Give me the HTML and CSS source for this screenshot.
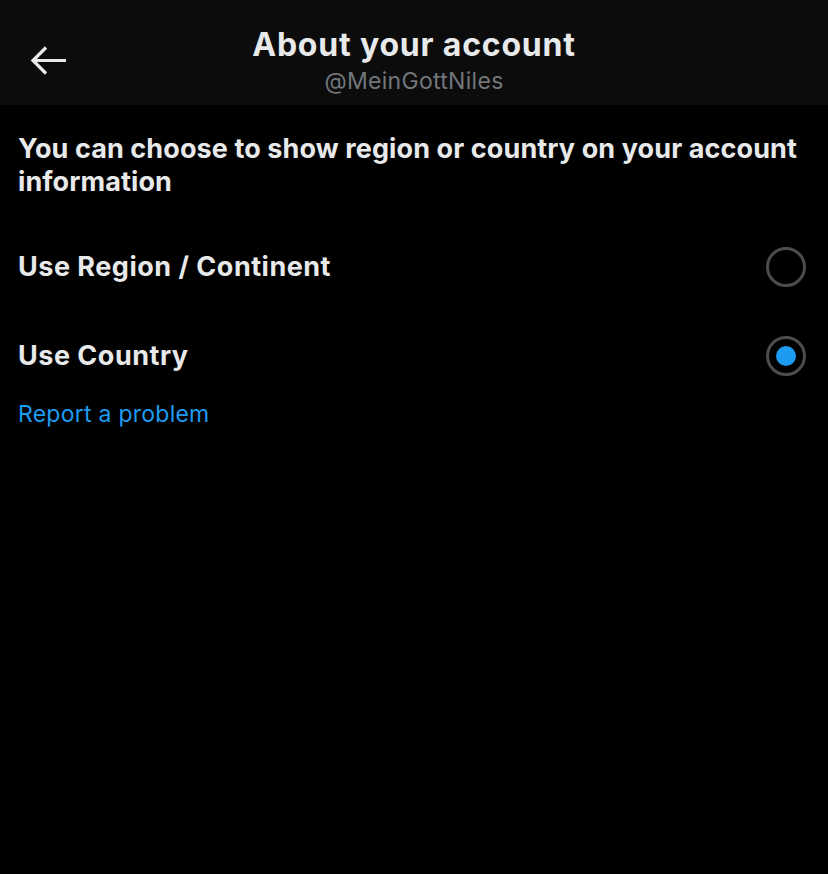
FILE: index.html
```html
<!DOCTYPE html>
<html lang="en">
<head>
    <meta charset="UTF-8">
    <meta name="viewport" content="width=device-width, initial-scale=1.0">
    <title>About your account</title>
    <link rel="stylesheet" href="styles.css">
</head>
<body>
    <div class="topbar">
        <button class="back-btn" aria-label="Back">
            <svg viewBox="0 0 38 32" width="38" height="32">
                <path d="M3 15.5H36M16 2.5L3 15.5L16 28.5"/>
            </svg>
        </button>
        <div class="topbar-title">
            <h1>About your account</h1>
            <div class="handle">@MeinGottNiles</div>
        </div>
    </div>

    <div class="content">
        <p class="intro">You can choose to show region or country on your account information</p>

        <label class="option">
            <span class="option-label">Use Region / Continent</span>
            <input type="radio" name="location" value="region">
            <span class="radio"></span>
        </label>

        <label class="option">
            <span class="option-label">Use Country</span>
            <input type="radio" name="location" value="country" checked>
            <span class="radio"></span>
        </label>

        <a class="report-link" href="#">Report a problem</a>
    </div>
</body>
</html>
```

FILE: styles.css
```css
* {
    margin: 0;
    padding: 0;
    box-sizing: border-box;
}

body {
    font-family: Inter, Roboto, "Noto Sans", sans-serif;
    background: #000;
    color: #e7e9ea;
    width: 828px;
    min-height: 874px;
}

.topbar {
    position: relative;
    height: 105px;
    background: #0c0c0c;
    display: flex;
    justify-content: center;
    align-items: flex-start;
}

.back-btn {
    position: absolute;
    left: 30px;
    top: 45px;
    width: 38px;
    height: 32px;
    background: none;
    border: none;
    cursor: pointer;
}

.back-btn svg {
    display: block;
    fill: none;
    stroke: #e7e9ea;
    stroke-width: 3.2;
}

.topbar-title {
    text-align: center;
    padding-top: 25px;
}

.topbar-title h1 {
    font-size: 32px;
    font-weight: 700;
    line-height: 40px;
    letter-spacing: 0.8px;
    color: #e7e9ea;
}

.handle {
    font-size: 23px;
    line-height: 33px;
    letter-spacing: 0.3px;
    color: #71767b;
}

.content {
    padding: 27px 18px 0;
}

.intro {
    font-size: 27px;
    font-weight: 700;
    line-height: 33px;
    letter-spacing: 0.1px;
    color: #e7e9ea;
}

.option {
    display: flex;
    align-items: center;
    justify-content: space-between;
    height: 89px;
    cursor: pointer;
}

.intro + .option {
    margin-top: 24px;
}

.option-label {
    font-size: 27px;
    font-weight: 700;
    letter-spacing: 0.5px;
    color: #e7e9ea;
}

.option input {
    display: none;
}

.radio {
    width: 40px;
    height: 40px;
    margin-right: 4px;
    border: 3px solid #4a4d50;
    border-radius: 50%;
    display: flex;
    align-items: center;
    justify-content: center;
}

.option input:checked + .radio::after {
    content: "";
    width: 20px;
    height: 20px;
    border-radius: 50%;
    background: #1d9bf0;
}

.report-link {
    display: inline-block;
    font-size: 23px;
    letter-spacing: 0.25px;
    color: #1d9bf0;
    text-decoration: none;
}
```
